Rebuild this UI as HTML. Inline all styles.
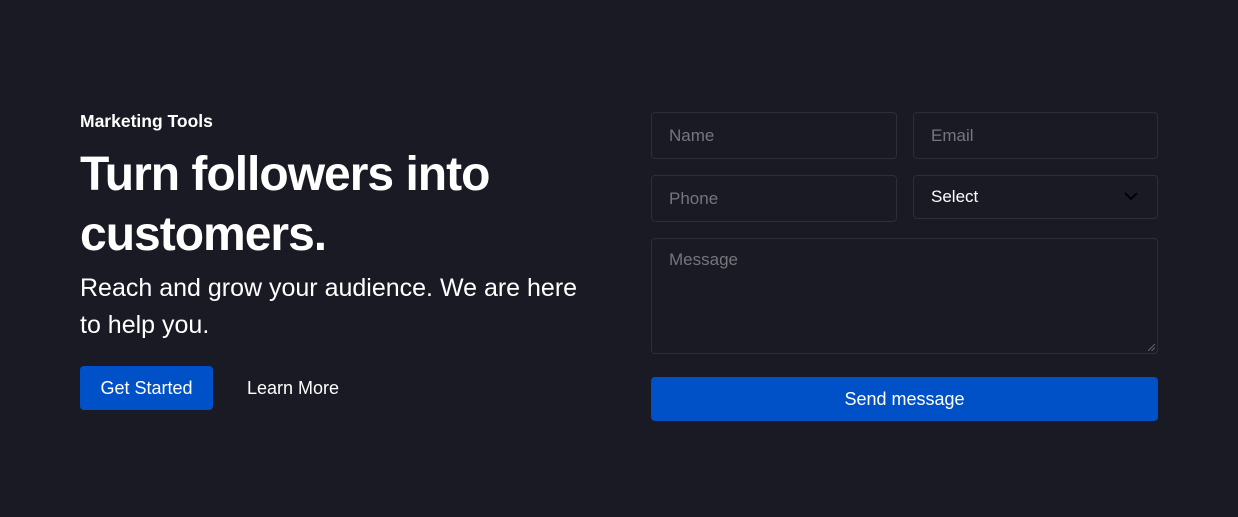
<!DOCTYPE html>
<html><head><meta charset="utf-8"><style>
*{margin:0;padding:0;box-sizing:border-box}
body{width:1238px;height:517px;background:#1a1a24;font-family:"Liberation Sans",sans-serif;color:#fff;position:relative;overflow:hidden}
.a{position:absolute}
.box{position:absolute;border:1px solid #2d2d3b;border-radius:4px;background:#1a1a24;color:#75757c;font-size:17px;padding-left:17px}
</style></head><body>
<div class="a" style="left:80px;top:110px;font-size:17.5px;font-weight:bold;line-height:22px">Marketing Tools</div>
<div class="a" style="left:80px;top:145px;font-size:48px;font-weight:bold;line-height:60px;letter-spacing:-1px;width:560px">Turn followers into<br>customers.</div>
<div class="a" style="left:80px;top:270px;font-size:25px;line-height:37px;width:600px">Reach and grow your audience. We are here<br>to help you.</div>
<div class="a" style="left:80px;top:366px;width:133px;height:44px;background:#0051c7;border-radius:4px;font-size:18px;line-height:44px;text-align:center">Get Started</div>
<div class="a" style="left:247px;top:366px;font-size:18px;line-height:44px">Learn More</div>

<div class="box" style="left:651px;top:112px;width:246px;height:47px;line-height:45px">Name</div>
<div class="box" style="left:913px;top:112px;width:245px;height:47px;line-height:45px">Email</div>
<div class="box" style="left:651px;top:175px;width:246px;height:47px;line-height:45px">Phone</div>
<div class="box" style="left:913px;top:175px;width:245px;height:44px;line-height:41px;color:#fff">Select
<svg class="a" style="left:210px;top:15px" width="14" height="10" viewBox="0 0 14 10"><path d="M1 2l6 6 6-6" fill="none" stroke="#000" stroke-width="1.8"/></svg></div>
<div class="box" style="left:651px;top:238px;width:507px;height:116px;line-height:20px;padding-top:11px">Message
<svg class="a" style="right:2px;bottom:2px" width="7" height="7"><path d="M0 7L7 0M3.5 7L7 3.5" stroke="#666" stroke-width="1"/></svg></div>
<div class="a" style="left:651px;top:377px;width:507px;height:44px;background:#0051c7;border-radius:4px;font-size:18px;line-height:44px;text-align:center">Send message</div>
</body></html>
